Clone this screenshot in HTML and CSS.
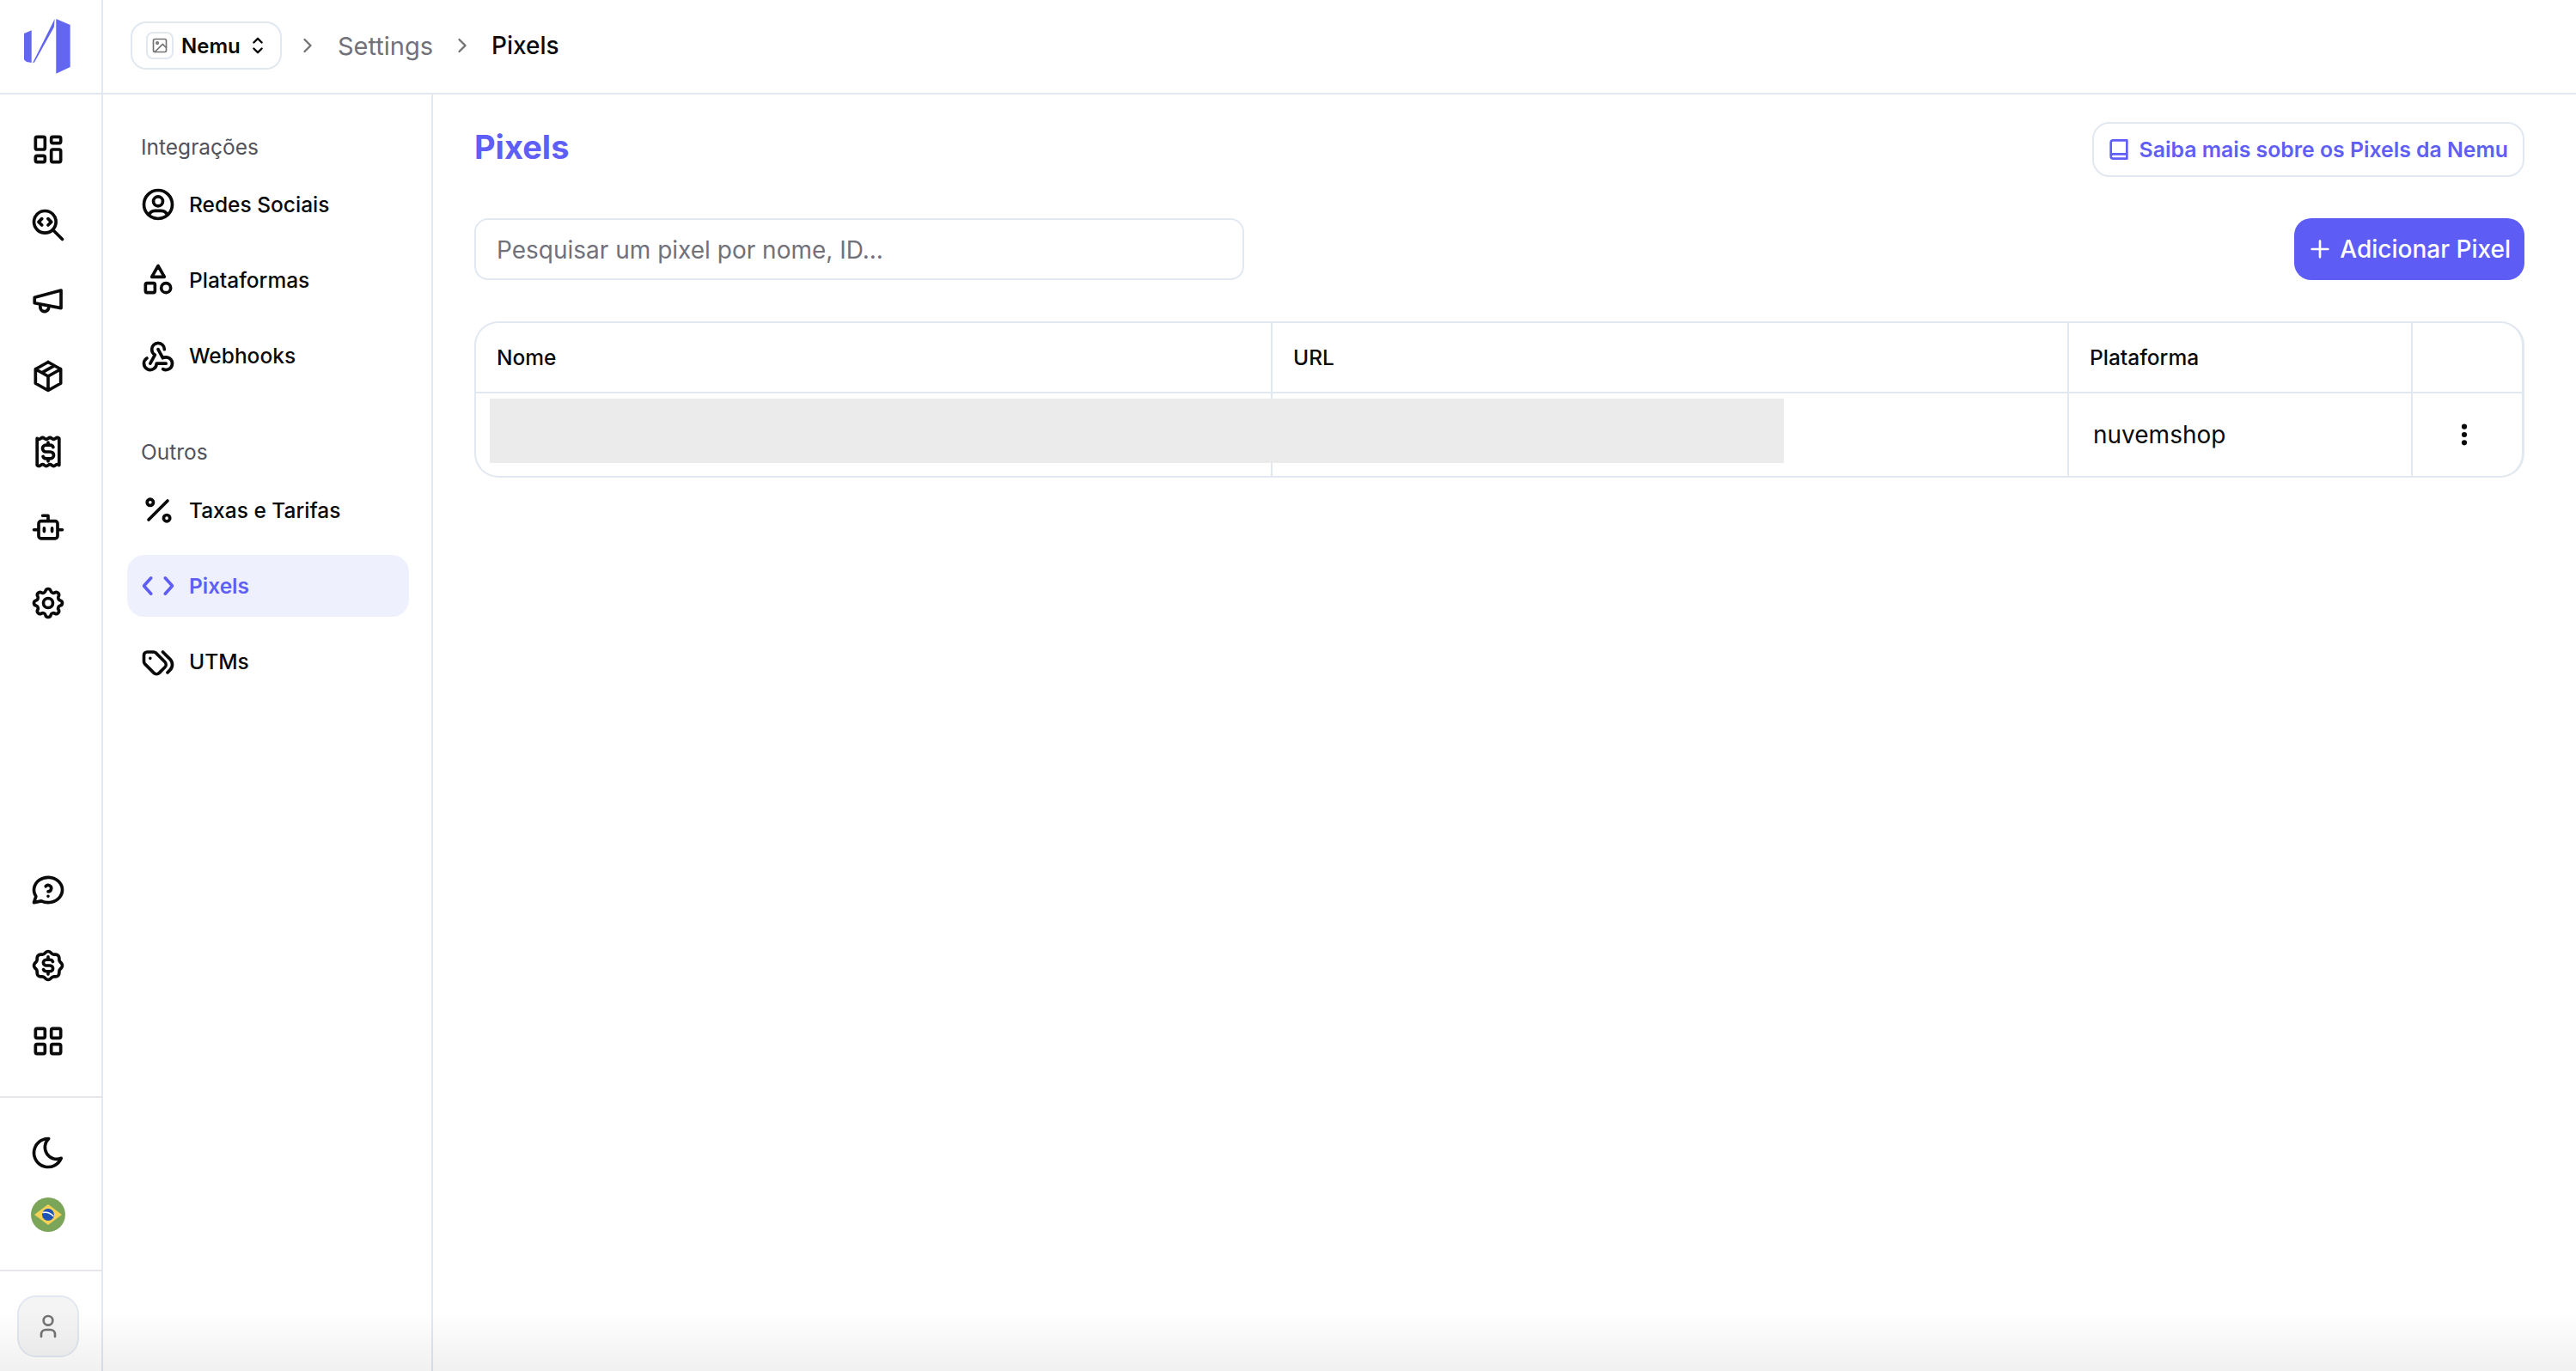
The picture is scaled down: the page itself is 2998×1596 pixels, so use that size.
FILE: index.html
```html
<!DOCTYPE html>
<html lang="pt-BR">
<head>
<meta charset="utf-8">
<title>Pixels</title>
<link rel="stylesheet" href="styles.css">
</head>
<body>
<div class="app">
  <header class="topbar">
    <div class="logo-cell">
      <svg class="logo" viewBox="0 0 120 108"><path d="M28 39l8.7-3.7V73L31 72l-3-2.500zM38.300 72.800L63.700 22l-.8 9.500L39.800 72.900zM65.300 22l16.400 7v49l-16.400 7.700z"/></svg>
    </div>
    <nav class="crumbs">
      <div class="org-chip">
        <span class="org-thumb"><svg class="ic ic-20 muted" viewBox="0 0 24 24"><rect x="3" y="3" width="18" height="18" rx="2"/><circle cx="8.500" cy="8.500" r="1.500"/><path d="M21 15l-5-5L5 21"/></svg></span>
        <span class="org-name">Nemu</span>
        <svg class="ic ic-28" viewBox="0 0 24 24"><path d="M8 9l4-4l4 4M16 15l-4 4l-4-4"/></svg>
      </div>
      <svg class="ic ic-28 muted" viewBox="0 0 24 24"><path d="M9 6l6 6l-6 6"/></svg>
      <span class="crumb">Settings</span>
      <svg class="ic ic-28 muted" viewBox="0 0 24 24"><path d="M9 6l6 6l-6 6"/></svg>
      <span class="crumb current">Pixels</span>
    </nav>
  </header>
  <div class="body">
    <aside class="rail">
      <div class="rail-group rail-main">
        <svg class="ic" viewBox="0 0 24 24"><path d="M5 4h4a1 1 0 0 1 1 1v6a1 1 0 0 1-1 1h-4a1 1 0 0 1-1-1v-6a1 1 0 0 1 1-1M5 16h4a1 1 0 0 1 1 1v2a1 1 0 0 1-1 1h-4a1 1 0 0 1-1-1v-2a1 1 0 0 1 1-1M15 12h4a1 1 0 0 1 1 1v6a1 1 0 0 1-1 1h-4a1 1 0 0 1-1-1v-6a1 1 0 0 1 1-1M15 4h4a1 1 0 0 1 1 1v2a1 1 0 0 1-1 1h-4a1 1 0 0 1-1-1v-2a1 1 0 0 1 1-1"/></svg>
        <svg class="ic" viewBox="0 0 24 24"><path d="M3 10a7 7 0 1 0 14 0a7 7 0 1 0-14 0M21 21l-6-6M8 8l-2 2l2 2M12 8l2 2l-2 2"/></svg>
        <svg class="ic" viewBox="0 0 24 24"><path d="M3.400 10L20.200 5.500v11.200L3.400 13.500zM7 14.500v1.800a2.700 2.700 0 0 0 5.300.6"/></svg>
        <svg class="ic" viewBox="0 0 24 24"><path d="M12 3l8 4.500v9l-8 4.500l-8-4.500v-9l8-4.500M12 12l8-4.500M12 12v9M12 12l-8-4.500M16 5.250l-8 4.500"/></svg>
        <svg class="ic" viewBox="0 0 24 24"><path d="M5 3.500q1.170 1 2.330 0t2.330 0t2.340 0t2.340 0t2.330 0t2.330 0v17q-1.170-1-2.330 0t-2.330 0t-2.340 0t-2.340 0t-2.330 0t-2.330 0zM15.200 9a2 2 0 0 0-1.800-1.300h-2.800a2.100 2.100 0 0 0 0 4.300h2.800a2.100 2.100 0 0 1 0 4.300h-2.800a2 2 0 0 1-1.800-1.300M12 6v1.700M12 16.300v1.700"/></svg>
        <svg class="ic" viewBox="0 0 24 24"><path d="M6 9.500a1.500 1.500 0 0 1 1.500-1.500h9a1.500 1.500 0 0 1 1.500 1.500v8a1.500 1.500 0 0 1-1.500 1.500h-9a1.500 1.500 0 0 1-1.500-1.500zM8.500 4.500h3.500v3.500M3 13.500h3M18 13.500h3M9.500 12.500v2M14.500 12.500v2"/></svg>
        <svg class="ic" viewBox="0 0 24 24"><path d="M10.325 4.317c.426-1.756 2.924-1.756 3.350 0a1.724 1.724 0 0 0 2.573 1.066c1.543-.94 3.310.826 2.370 2.370a1.724 1.724 0 0 0 1.065 2.572c1.756.426 1.756 2.924 0 3.350a1.724 1.724 0 0 0-1.066 2.573c.94 1.543-.826 3.310-2.370 2.370a1.724 1.724 0 0 0-2.572 1.065c-.426 1.756-2.924 1.756-3.350 0a1.724 1.724 0 0 0-2.573-1.066c-1.543.94-3.310-.826-2.370-2.370a1.724 1.724 0 0 0-1.065-2.572c-1.756-.426-1.756-2.924 0-3.350a1.724 1.724 0 0 0 1.066-2.573c-.94-1.543.826-3.310 2.370-2.370c1 .608 2.296.07 2.572-1.065M9 12a3 3 0 1 0 6 0a3 3 0 0 0-6 0"/></svg>
      </div>
      <div class="rail-group rail-help">
        <svg class="ic" viewBox="0 0 24 24"><path d="M3 20l1.300-3.900c-2.324-3.437-1.426-7.872 2.100-10.374c3.526-2.501 8.590-2.296 11.845.48c3.255 2.777 3.695 7.266 1.029 10.501c-2.666 3.235-7.615 4.215-11.574 2.293l-4.700 1M12 16v.01M12 13a2 2 0 0 0 .914-3.782a1.980 1.980 0 0 0-2.414.483"/></svg>
        <svg class="ic" viewBox="0 0 24 24"><path d="M5 7.200a2.200 2.200 0 0 1 2.200-2.200h1a2.200 2.200 0 0 0 1.550-.64l.7-.7a2.200 2.200 0 0 1 3.120 0l.7.7c.412.41.97.64 1.550.64h1a2.200 2.200 0 0 1 2.200 2.200v1c0 .58.23 1.138.64 1.550l.7.7a2.200 2.200 0 0 1 0 3.120l-.7.7a2.200 2.200 0 0 0-.64 1.550v1a2.200 2.200 0 0 1-2.200 2.200h-1a2.200 2.200 0 0 0-1.550.64l-.7.7a2.200 2.200 0 0 1-3.120 0l-.7-.7a2.200 2.200 0 0 0-1.550-.64h-1a2.200 2.200 0 0 1-2.200-2.200v-1a2.200 2.200 0 0 0-.64-1.550l-.7-.7a2.200 2.200 0 0 1 0-3.120l.7-.7a2.200 2.200 0 0 0 .64-1.550v-1M15 9.500a2 2 0 0 0-1.800-1.200h-2.400a1.850 1.850 0 0 0 0 3.700h2.400a1.850 1.850 0 0 1 0 3.700h-2.400a2 2 0 0 1-1.800-1.200M12 6.500v1.800M12 15.700v1.800"/></svg>
        <svg class="ic" viewBox="0 0 24 24"><path d="M5 4h4a1 1 0 0 1 1 1v4a1 1 0 0 1-1 1h-4a1 1 0 0 1-1-1v-4a1 1 0 0 1 1-1M15 4h4a1 1 0 0 1 1 1v4a1 1 0 0 1-1 1h-4a1 1 0 0 1-1-1v-4a1 1 0 0 1 1-1M5 14h4a1 1 0 0 1 1 1v4a1 1 0 0 1-1 1h-4a1 1 0 0 1-1-1v-4a1 1 0 0 1 1-1M15 14h4a1 1 0 0 1 1 1v4a1 1 0 0 1-1 1h-4a1 1 0 0 1-1-1v-4a1 1 0 0 1 1-1"/></svg>
      </div>
      <div class="rail-group rail-prefs">
        <svg class="ic" viewBox="0 0 24 24"><path d="M12 3c.132 0 .263 0 .393 0a7.500 7.500 0 0 0 7.920 12.446a9 9 0 1 1-8.313-12.454z"/></svg>
        <svg class="flag" viewBox="0 0 40 40"><circle cx="20" cy="20" r="20" fill="#7ba659"/><path d="M20 8l16 12l-16 12L4 20z" fill="#f7d354"/><circle cx="20" cy="20" r="7" fill="#2152b5"/><path d="M13.500 17.500c5-1 9.500.5 12.800 4.500" fill="none" stroke="#fff" stroke-width="1.500"/></svg>
      </div>
      <div class="rail-group rail-user">
        <button class="avatar" type="button"><svg class="ic ic-32 muted" viewBox="0 0 24 24"><path d="M8 7a4 4 0 1 0 8 0a4 4 0 0 0-8 0M6 21v-2a4 4 0 0 1 4-4h4a4 4 0 0 1 4 4v2"/></svg></button>
      </div>
    </aside>

    <aside class="side">
      <h2 class="side-title">Integrações</h2>
      <ul class="side-list">
        <li class="side-item"><svg class="ic" viewBox="0 0 24 24"><path d="M3 12a9 9 0 1 0 18 0a9 9 0 1 0-18 0M9 10a3 3 0 1 0 6 0a3 3 0 1 0-6 0M6.168 18.849a4 4 0 0 1 3.832-2.849h4a4 4 0 0 1 3.834 2.855"/></svg>Redes Sociais</li>
        <li class="side-item"><svg class="ic" viewBox="0 0 24 24"><path d="M12 3l-4 7h8zM14 17a3 3 0 1 0 6 0a3 3 0 1 0-6 0M4 15a1 1 0 0 1 1-1h4a1 1 0 0 1 1 1v4a1 1 0 0 1-1 1h-4a1 1 0 0 1-1-1z"/></svg>Plataformas</li>
        <li class="side-item"><svg class="ic" viewBox="0 0 24 24"><path d="M4.876 13.610a4 4 0 1 0 6.124 3.390h6M15.066 20.502a4 4 0 1 0 1.934-7.502c-.706 0-1.424.179-2 .5l-3-5.500M16 8a4 4 0 1 0-8 0c0 1.506.77 2.818 2 3.500l-3 5.500"/></svg>Webhooks</li>
      </ul>
      <h2 class="side-title side-title-next">Outros</h2>
      <ul class="side-list">
        <li class="side-item"><svg class="ic" viewBox="0 0 24 24"><path d="M15.500 17a2 2 0 1 0 4 0a2 2 0 1 0-4 0M5 7a2 2 0 1 0 4 0a2 2 0 1 0-4 0M6 18l12-12"/></svg>Taxas e Tarifas</li>
        <li class="side-item active"><svg class="ic" viewBox="0 0 24 24"><path d="M7.500 7l-4.500 5l4.500 5M16.500 7l4.500 5l-4.500 5"/></svg>Pixels</li>
        <li class="side-item"><svg class="ic" viewBox="0 0 24 24"><path d="M3 8v4.172a2 2 0 0 0 .586 1.414l5.710 5.710a2.410 2.410 0 0 0 3.408 0l3.592-3.592a2.410 2.410 0 0 0 0-3.408l-5.710-5.710a2 2 0 0 0-1.414-.586h-4.172a2 2 0 0 0-2 2zM18 19l1.592-1.592a4.820 4.820 0 0 0 0-6.816l-4.592-4.592M7 10h-.01"/></svg>UTMs</li>
      </ul>
    </aside>

    <main class="main">
      <div class="title-row">
        <h1 class="title">Pixels</h1>
        <a class="learn" href="#"><svg class="ic ic-32" viewBox="0 0 24 24"><path d="M19 4v16h-12a2 2 0 0 1-2-2v-12a2 2 0 0 1 2-2zM19 16h-12a2 2 0 0 0-2 2"/></svg>Saiba mais sobre os Pixels da Nemu</a>
      </div>
      <div class="tools">
        <input class="search" type="text" placeholder="Pesquisar um pixel por nome, ID...">
        <button class="add" type="button"><svg class="ic ic-32" viewBox="0 0 24 24"><path d="M12 5v14M5 12h14"/></svg>Adicionar Pixel</button>
      </div>
      <div class="table-wrap">
        <table class="table">
          <colgroup><col class="c-name"><col class="c-url"><col class="c-plat"><col></colgroup>
          <thead>
            <tr><th>Nome</th><th>URL</th><th>Plataforma</th><th></th></tr>
          </thead>
          <tbody>
            <tr>
              <td></td><td></td>
              <td class="plat">nuvemshop</td>
              <td class="more"><svg class="kebab" viewBox="0 0 24 24"><circle cx="12" cy="5" r="2.300"/><circle cx="12" cy="12" r="2.300"/><circle cx="12" cy="19" r="2.300"/></svg></td>
            </tr>
          </tbody>
        </table>
        <div class="skeleton"></div>
      </div>
    </main>
  </div>
  <div class="fade"></div>
</div>
</body>
</html>
```
FILE: styles.css
```css
* { box-sizing: border-box; }
html, body { margin: 0; height: 100%; }
body {
  background: #fff;
  color: #0a0a0a;
  font-family: Inter, "Noto Sans", sans-serif;
  overflow: hidden;
}
ul { list-style: none; margin: 0; padding: 0; }
h1, h2 { margin: 0; }

.ic {
  width: 44px;
  height: 44px;
  flex: none;
  fill: none;
  stroke: currentColor;
  stroke-width: 2;
  stroke-linecap: round;
  stroke-linejoin: round;
}
.ic-20 { width: 20px; height: 20px; }
.ic-28 { width: 28px; height: 28px; }
.ic-32 { width: 32px; height: 32px; }
.muted { color: #737373; }

.app { position: relative; height: 100vh; display: flex; flex-direction: column; }

/* Top bar */
.topbar { height: 110px; flex: none; display: flex; border-bottom: 2px solid #e2e8f0; }
.logo-cell { width: 120px; flex: none; border-right: 2px solid #e2e8f0; }
.logo { display: block; width: 120px; height: 108px; fill: #6366f1; }
.crumbs { display: flex; align-items: center; padding: 0 0 2px 32px; }
.org-chip {
  width: 176px;
  height: 56px;
  display: flex;
  align-items: center;
  padding-left: 16px;
  border: 2px solid #e2e8f0;
  border-radius: 18px;
}
.org-thumb {
  width: 32px;
  height: 32px;
  display: flex;
  align-items: center;
  justify-content: center;
  border: 2px solid #e2e8f0;
  border-radius: 8px;
}
.org-name { margin: 0 6px 0 9px; font-size: 24px; font-weight: 600; }
.crumbs > .ic { margin: 0 20px; }
.crumbs > .org-chip + .ic { margin: 0 21px 0 16px; }
.crumb { font-size: 29px; color: #71717a; }
.crumb.current { font-size: 28px; color: #0a0a0a; font-weight: 500; }

.body { flex: 1; min-height: 0; display: flex; }

/* Icon rail */
.rail {
  width: 120px;
  flex: none;
  display: flex;
  flex-direction: column;
  border-right: 2px solid #e2e8f0;
}
.rail-group { display: flex; flex-direction: column; align-items: center; padding-right: 6px; }
.rail-main { gap: 44px; padding-top: 42px; }
.rail-help { gap: 44px; margin-top: auto; padding-bottom: 42px; }
.rail-prefs { gap: 30px; padding-top: 42px; padding-bottom: 44px; border-top: 2px solid #e5e7eb; border-bottom: 2px solid #e5e7eb; }
.flag { width: 40px; height: 40px; display: block; }
.rail-user { height: 116px; flex: none; padding-top: 28px; }
.avatar {
  width: 72px;
  height: 72px;
  display: flex;
  align-items: center;
  justify-content: center;
  padding: 0;
  background: #f4f4f5;
  border: 2px solid #e2e8f0;
  border-radius: 22px;
}

/* Settings sidebar */
.side {
  width: 384px;
  flex: none;
  padding: 45px 26px 0 28px;
  border-right: 2px solid #e2e8f0;
}
.side-title {
  height: 32px;
  line-height: 32px;
  padding-left: 16px;
  font-size: 24.500px;
  font-weight: 400;
  color: #52525b;
}
.side-title-next { margin-top: 60px; }
.side-list { margin-top: 15px; display: flex; flex-direction: column; gap: 16px; }
.side-title-next + .side-list { margin-top: 16px; }
.side-item {
  height: 72px;
  display: flex;
  align-items: center;
  gap: 14px;
  padding-left: 14px;
  border-radius: 20px;
  font-size: 24.500px;
  font-weight: 500;
}
.side-item.active { background: #eef0fd; color: #5f5ef6; font-weight: 600; }

/* Main */
.main { flex: 1; min-width: 0; padding: 32px 60px 0 48px; }
.title-row { display: flex; justify-content: space-between; align-items: flex-start; }
.title { font-size: 38px; line-height: 58px; font-weight: 700; color: #5f5ef6; }
.learn {
  height: 64px;
  display: flex;
  align-items: center;
  gap: 8px;
  padding: 0 17px 0 13px;
  border: 2px solid #e2e8f0;
  border-radius: 20px;
  font-size: 24.800px;
  font-weight: 600;
  color: #5f5ef6;
  text-decoration: none;
}
.tools { display: flex; justify-content: space-between; margin-top: 48px; }
.search {
  width: 896px;
  height: 72px;
  padding: 2px 24px 0;
  border: 2px solid #e2e8f0;
  border-radius: 16px;
  background: #fff;
  font: 400 28px Inter, sans-serif;
  color: #0a0a0a;
  outline: none;
}
.search::placeholder { color: #71717a; opacity: 1; }
.add {
  height: 72px;
  display: flex;
  align-items: center;
  gap: 7px;
  padding: 0 16px 0 14px;
  border: 0;
  border-radius: 20px;
  background: #5d5cf5;
  color: #fff;
  font: 500 28px Inter, sans-serif;
}

.table-wrap {
  position: relative;
  margin-top: 48px;
  height: 182px;
  border: 2px solid #e2e8f0;
  border-right-width: 3px;
  border-radius: 28px;
  overflow: hidden;
}
.table { width: 100%; height: 100%; table-layout: fixed; border-collapse: separate; border-spacing: 0; }
.c-name { width: 927px; }
.c-url { width: 927px; }
.c-plat { width: 400px; }
.table th, .table td { padding: 0 0 0 24px; text-align: left; border-right: 2px solid #e2e8f0; }
.table th:last-child, .table td:last-child { border-right: 0; }
.table th { height: 82px; font-size: 24.500px; font-weight: 500; border-bottom: 2px solid #e2e8f0; }
.table td { font-size: 28px; }
.table td.plat { padding-left: 28px; }
.table td.more { padding: 0 0 0 44px; }
.kebab { display: block; width: 32px; height: 32px; fill: #0a0a0a; }
.skeleton { position: absolute; left: 16px; top: 88px; width: 1506px; height: 75px; background: #ebebeb; }

.fade {
  position: absolute;
  left: 0;
  right: 0;
  bottom: 0;
  height: 70px;
  background: linear-gradient(rgba(0,0,0,0), rgba(0,0,0,.06));
  pointer-events: none;
}
```
